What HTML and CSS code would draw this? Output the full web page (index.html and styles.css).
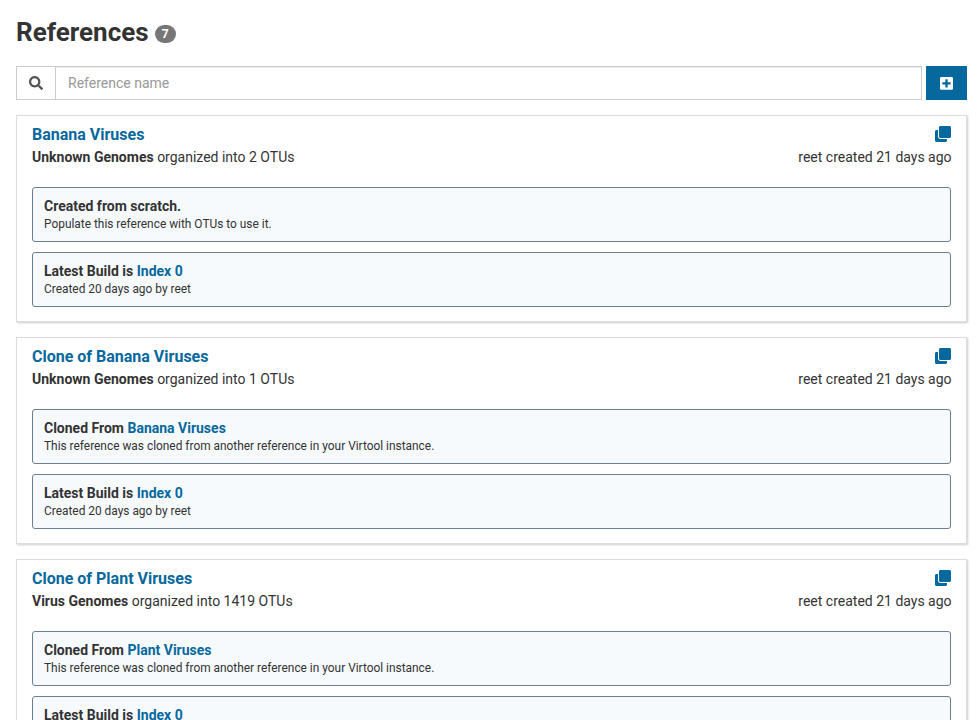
FILE: index.html
```html
<!DOCTYPE html>
<html lang="en">
<head>
<meta charset="utf-8">
<title>References</title>
<link rel="stylesheet" href="styles.css">
</head>
<body>
<svg class="sprite" aria-hidden="true">
  <symbol id="clone" viewBox="0 0 512 512"><path d="M464 0c26.510 0 48 21.490 48 48v288c0 26.510-21.490 48-48 48H176c-26.510 0-48-21.490-48-48V48c0-26.510 21.490-48 48-48h288M176 416c-44.112 0-80-35.888-80-80V128H48c-26.510 0-48 21.490-48 48v288c0 26.510 21.490 48 48 48h288c26.510 0 48-21.490 48-48v-48H176z"/></symbol>
</svg>
<main class="page">
  <h1 class="title">References <span class="badge">7</span></h1>
  <div class="toolbar">
    <div class="search">
      <span class="addon"><svg class="icon-search" viewBox="0 0 512 512"><path d="M505 442.700L405.300 343c-4.500-4.500-10.600-7-17-7H372c27.600-35.300 44-79.700 44-128C416 93.100 322.900 0 208 0S0 93.100 0 208s93.100 208 208 208c48.300 0 92.700-16.400 128-44v16.300c0 6.400 2.500 12.500 7 17l99.700 99.700c9.400 9.400 24.600 9.400 33.900 0l28.300-28.300c9.400-9.400 9.400-24.600.1-34zM208 336c-70.700 0-128-57.200-128-128 0-70.700 57.200-128 128-128 70.700 0 128 57.200 128 128 0 70.700-57.200 128-128 128z"/></svg></span>
      <input class="field" type="text" placeholder="Reference name">
    </div>
    <button class="create" type="button" aria-label="Create"><svg class="icon-plus" viewBox="0 0 448 512"><path d="M400 32H48C21.500 32 0 53.500 0 80v352c0 26.500 21.500 48 48 48h352c26.500 0 48-21.500 48-48V80c0-26.500-21.500-48-48-48zm-32 252c0 6.600-5.400 12-12 12h-92v92c0 6.600-5.400 12-12 12h-56c-6.600 0-12-5.400-12-12v-92H92c-6.600 0-12-5.400-12-12v-56c0-6.600 5.400-12 12-12h92v-92c0-6.600 5.400-12 12-12h56c6.600 0 12 5.400 12 12v92h92c6.600 0 12 5.400 12 12v56z"/></svg></button>
  </div>

  <article class="card">
    <div class="heading"><a class="name">Banana Viruses</a><svg class="icon-clone"><use href="#clone"/></svg></div>
    <div class="meta"><span><strong>Unknown Genomes</strong> organized into 2 OTUs</span><span class="author">reet created 21 days ago</span></div>
    <section class="box"><strong>Created from scratch.</strong><small>Populate this reference with OTUs to use it.</small></section>
    <section class="box"><strong>Latest Build is <a>Index 0</a></strong><small>Created 20 days ago by reet</small></section>
  </article>

  <article class="card">
    <div class="heading"><a class="name">Clone of Banana Viruses</a><svg class="icon-clone"><use href="#clone"/></svg></div>
    <div class="meta"><span><strong>Unknown Genomes</strong> organized into 1 OTUs</span><span class="author">reet created 21 days ago</span></div>
    <section class="box"><strong>Cloned From <a>Banana Viruses</a></strong><small>This reference was cloned from another reference in your Virtool instance.</small></section>
    <section class="box"><strong>Latest Build is <a>Index 0</a></strong><small>Created 20 days ago by reet</small></section>
  </article>

  <article class="card">
    <div class="heading"><a class="name">Clone of Plant Viruses</a><svg class="icon-clone"><use href="#clone"/></svg></div>
    <div class="meta"><span><strong>Virus Genomes</strong> organized into 1419 OTUs</span><span class="author">reet created 21 days ago</span></div>
    <section class="box"><strong>Cloned From <a>Plant Viruses</a></strong><small>This reference was cloned from another reference in your Virtool instance.</small></section>
    <section class="box"><strong>Latest Build is <a>Index 0</a></strong></section>
  </article>
</main>
</body>
</html>
```
FILE: styles.css
```css
* { box-sizing: border-box; }

html, body { height: 100%; }

body {
  margin: 0;
  overflow: hidden;
  background: #fff;
  color: #333;
  font: 14px/20px Roboto, "Liberation Sans", sans-serif;
}

a { color: #07689d; }
strong { font-weight: 700; }
svg { display: block; fill: currentColor; }
.sprite { display: none; }

.page { padding: 16px 13px 0 16px; }

.title {
  display: flex;
  align-items: center;
  gap: 6px;
  height: 32px;
  margin: 0 0 18px;
  font-size: 26px;
  font-weight: 700;
  line-height: 32px;
}

.badge {
  min-width: 21px;
  margin-top: 3px;
  padding: 3px 7px;
  border-radius: 10px;
  background: #777;
  color: #fff;
  font-size: 12px;
  line-height: 12px;
  text-align: center;
}

.toolbar {
  display: flex;
  gap: 4px;
  height: 34px;
  margin-bottom: 15px;
}

.search {
  display: flex;
  flex: 1;
  border: 1px solid #ccc;
}

.addon {
  display: flex;
  align-items: center;
  justify-content: center;
  width: 39px;
  border-right: 1px solid #ccc;
  color: #555;
}

.icon-search { width: 14px; height: 14px; }

.field {
  flex: 1;
  min-width: 0;
  padding: 6px 12px;
  border: 0;
  outline: 0;
  box-shadow: inset 0 1px 1px rgba(0, 0, 0, .075);
  font: inherit;
}

.field::placeholder { color: #999; opacity: 1; }

.create {
  display: flex;
  align-items: center;
  justify-content: center;
  width: 41px;
  padding: 0;
  border: 0;
  background: #07689d;
  color: #fff;
}

.icon-plus { width: 13px; height: 14.8px; }

.card {
  height: 207px;
  margin-bottom: 15px;
  padding: 7px 15px 0;
  border: 1px solid #ddd;
  box-shadow: 1px 1px 2px 0 rgba(0, 0, 0, .2);
}

.heading, .meta {
  display: flex;
  align-items: center;
  justify-content: space-between;
}

.heading { height: 22px; color: #07689d; }
.name { padding-top: 2px; font-size: 16px; font-weight: 700; }
.icon-clone { width: 16px; height: 16px; }
.meta { height: 24px; margin-bottom: 18px; }
.author { margin-right: -.6px; }

.box {
  display: flex;
  flex-direction: column;
  height: 55px;
  margin-bottom: 10px;
  padding: 8px 11px;
  border: 1px solid #6c7f98;
  border-radius: 3px;
  background: #f6fafd;
}

.box small { font-size: 85%; line-height: 17px; }
```
